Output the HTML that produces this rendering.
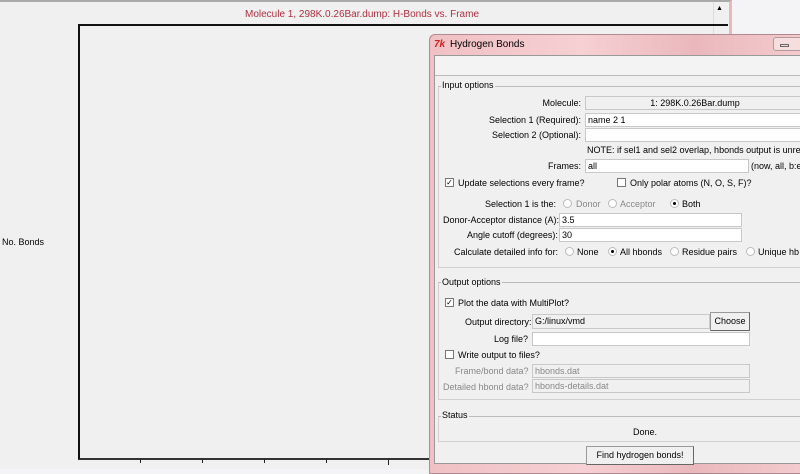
<!DOCTYPE html>
<html><head><meta charset="utf-8"><style>
*{margin:0;padding:0;box-sizing:border-box}
body{width:800px;height:469px;overflow:hidden;background:#f4f4f7;font-family:"Liberation Sans",Arial,sans-serif;font-size:9px;color:#000;position:relative}
.a{position:absolute;white-space:nowrap}
.f{position:absolute;border:1px solid #c8c8c8;background:#fff;padding:1px 2px;font-size:9px;line-height:11px}
.g{background:#f0f0f0}
.cb{position:absolute;width:9px;height:9px;border:1px solid #777;background:#fff;font-size:8px;line-height:7px;text-align:center}
.rd{position:absolute;width:9px;height:9px;border-radius:50%;border:1px solid #bbb;background:#fff}
.rd.on::after{content:"";position:absolute;left:2px;top:2px;width:3px;height:3px;border-radius:50%;background:#000}
.fr{position:absolute;border:1px solid #d0d0d0;border-top-color:#bbb}
.lab{position:absolute;background:#f0f0f0;padding:0 1px}
.r{text-align:right}
</style></head><body>
<div class="a" style="left:0;top:0;width:732px;height:469px;background:#f0f0f0;border-top:2px solid #aaa;border-right:3px solid #e9b8bb"></div>
<div class="a" style="left:245px;top:9px;color:#b03040;font-size:10px">Molecule 1, 298K.0.26Bar.dump: H-Bonds vs. Frame</div>
<div class="a" style="left:713px;top:2px;width:15px;height:467px;background:#f0f0f0;border-left:1px solid #ddd"></div>
<div class="a" style="left:716px;top:5px;font-size:7px">▲</div>
<div class="a" style="left:78px;top:24px;width:650px;height:436px;border-left:2px solid #111;border-top:2px solid #111;border-bottom:2px solid #333"></div>
<div class="a" style="left:2px;top:237px;font-size:9px">No. Bonds</div>
<div class="a" style="left:140px;top:459px;width:1px;height:4px;background:#222"></div>
<div class="a" style="left:202px;top:459px;width:1px;height:4px;background:#222"></div>
<div class="a" style="left:264px;top:459px;width:1px;height:4px;background:#222"></div>
<div class="a" style="left:326px;top:459px;width:1px;height:4px;background:#222"></div>
<div class="a" style="left:388px;top:459px;width:1px;height:6px;background:#222"></div>
<div class="a" style="left:429px;top:34px;width:380px;height:440px;background:linear-gradient(90deg,#f0c0c4,#f6d0d3 40%,#eab8bc 70%,#f4cccf);border:1px solid #b08a8e;border-radius:6px 0 0 0"></div>
<div class="a" style="left:434px;top:39px;color:#d02020;font-weight:bold;font-style:italic;font-size:10px">7k</div>
<div class="a" style="left:450px;top:39px;font-size:10px">Hydrogen Bonds</div>
<div class="a" style="left:773px;top:37px;width:30px;height:14px;border:1px solid #b09a9c;border-radius:3px;background:#f6dede"></div>
<div class="a" style="left:780px;top:44px;width:9px;height:3px;border:1px solid #666"></div>
<div class="a" style="left:434px;top:55px;width:370px;height:409px;background:#f0f0f0;border:1px solid #999"></div>
<div class="a" style="left:435px;top:56px;width:370px;height:20px;background:#f3f3f3;border-bottom:1px solid #bbb"></div>
<div class="fr" style="left:438px;top:86px;width:370px;height:182px"></div>
<div class="lab" style="left:441px;top:80px">Input options</div>
<div class="a r" style="right:219px;top:98px">Molecule:</div>
<div class="f g" style="left:585px;top:96px;width:220px;height:14px;text-align:center">1: 298K.0.26Bar.dump</div>
<div class="a r" style="right:219px;top:115px">Selection 1 (Required):</div>
<div class="f" style="left:585px;top:113px;width:220px;height:14px">name 2 1</div>
<div class="a r" style="right:219px;top:130px">Selection 2 (Optional):</div>
<div class="f" style="left:585px;top:128px;width:220px;height:14px"></div>
<div class="a" style="left:587px;top:145px">NOTE: if sel1 and sel2 overlap, hbonds output is unrel</div>
<div class="a r" style="right:219px;top:161px">Frames:</div>
<div class="f" style="left:585px;top:159px;width:164px;height:14px">all</div>
<div class="a" style="left:751px;top:161px">(now, all, b:e</div>
<div class="cb" style="left:445px;top:178px">✓</div>
<div class="a" style="left:458px;top:178px">Update selections every frame?</div>
<div class="cb" style="left:617px;top:178px"></div>
<div class="a" style="left:630px;top:178px">Only polar atoms (N, O, S, F)?</div>
<div class="a" style="left:485px;top:199px">Selection 1 is the:</div>
<div class="rd" style="left:563px;top:199px"></div><div class="a" style="left:576px;top:199px;color:#888">Donor</div>
<div class="rd" style="left:608px;top:199px"></div><div class="a" style="left:620px;top:199px;color:#888">Acceptor</div>
<div class="rd on" style="left:670px;top:199px"></div><div class="a" style="left:682px;top:199px">Both</div>
<div class="a" style="left:443px;top:215px">Donor-Acceptor distance (A):</div>
<div class="f" style="left:559px;top:213px;width:183px;height:14px">3.5</div>
<div class="a" style="left:467px;top:230px">Angle cutoff (degrees):</div>
<div class="f" style="left:559px;top:228px;width:183px;height:14px">30</div>
<div class="a" style="left:454px;top:247px">Calculate detailed info for:</div>
<div class="rd" style="left:565px;top:247px"></div><div class="a" style="left:577px;top:247px">None</div>
<div class="rd on" style="left:608px;top:247px"></div><div class="a" style="left:620px;top:247px">All hbonds</div>
<div class="rd" style="left:670px;top:247px"></div><div class="a" style="left:682px;top:247px">Residue pairs</div>
<div class="rd" style="left:746px;top:247px"></div><div class="a" style="left:758px;top:247px">Unique hb</div>
<div class="fr" style="left:438px;top:282px;width:370px;height:118px"></div>
<div class="lab" style="left:441px;top:277px">Output options</div>
<div class="cb" style="left:445px;top:298px">✓</div>
<div class="a" style="left:458px;top:298px">Plot the data with MultiPlot?</div>
<div class="a" style="left:465px;top:317px">Output directory:</div>
<div class="f g" style="left:532px;top:314px;width:178px;height:15px">G:/linux/vmd</div>
<div class="a" style="left:710px;top:312px;width:40px;height:19px;border:1px solid #999;border-right-color:#666;border-bottom-color:#666;background:#f0f0f0;text-align:center;line-height:17px">Choose</div>
<div class="a" style="left:494px;top:334px">Log file?</div>
<div class="f" style="left:532px;top:332px;width:218px;height:14px"></div>
<div class="cb" style="left:445px;top:350px"></div>
<div class="a" style="left:458px;top:350px">Write output to files?</div>
<div class="a" style="left:455px;top:366px;color:#888">Frame/bond data?</div>
<div class="f g" style="left:532px;top:364px;width:218px;height:14px;color:#888">hbonds.dat</div>
<div class="a" style="left:443px;top:382px;color:#888">Detailed hbond data?</div>
<div class="f g" style="left:532px;top:379px;width:218px;height:14px;color:#888">hbonds-details.dat</div>
<div class="fr" style="left:438px;top:416px;width:370px;height:26px"></div>
<div class="lab" style="left:441px;top:410px">Status</div>
<div class="a" style="left:633px;top:427px">Done.</div>
<div class="a" style="left:586px;top:446px;width:108px;height:19px;border:1px solid #999;border-right-color:#666;border-bottom-color:#666;background:#f0f0f0;text-align:center;line-height:17px">Find hydrogen bonds!</div>
</body></html>
